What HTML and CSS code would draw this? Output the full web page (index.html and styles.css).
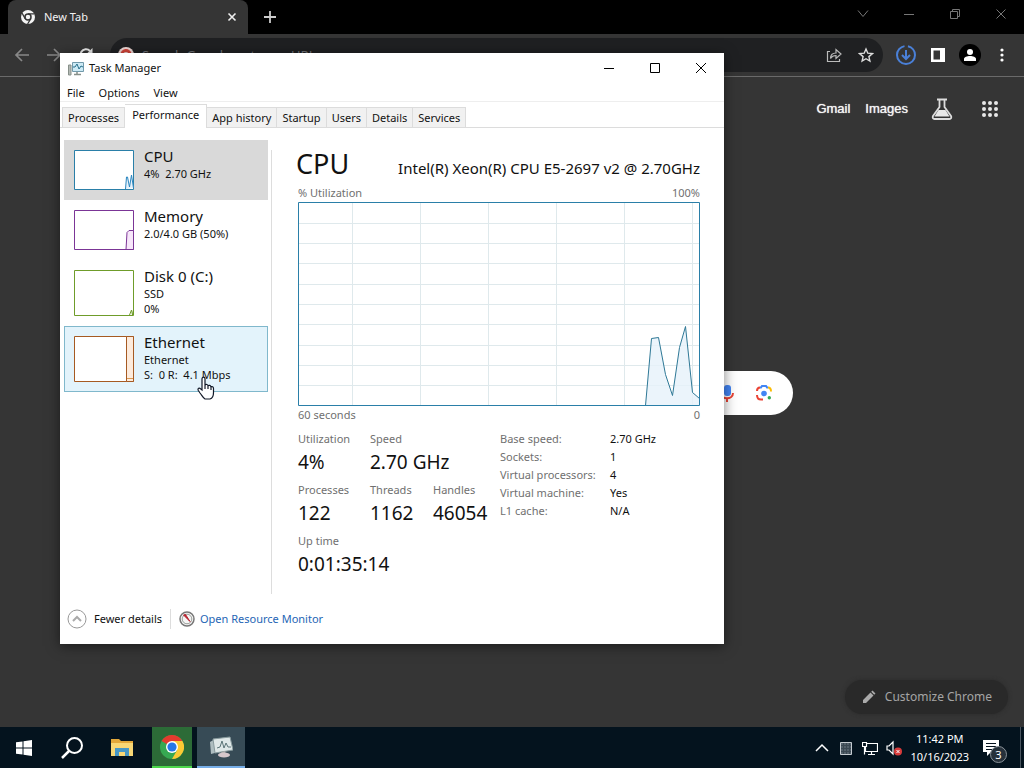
FILE: index.html
```html
<!DOCTYPE html>
<html lang="en">
<head>
<meta charset="utf-8">
<title>Desktop</title>
<link rel="stylesheet" href="styles.css">
</head>
<body>
<div class="desktop">
  <div class="browser">
    <div class="tab-strip">
      <div class="browser-tab">
        <svg class="i16" viewBox="0 0 16 16"><circle cx="8" cy="8" r="7" fill="#f4f4f4"/><circle cx="8" cy="8" r="3" fill="#f4f4f4" stroke="#353535" stroke-width="1.5"/><path d="M8 4.800h6.500M5.200 9.600L2 4M10.800 9.600L7.600 15" stroke="#353535" stroke-width="1.300"/></svg>
        <span class="browser-tab-title">New Tab</span>
        <button class="plain" aria-label="Close tab"><svg class="i16" viewBox="0 0 16 16"><path d="M4.500 4.500l7 7M11.500 4.500l-7 7" stroke="#eee" stroke-width="1.600"/></svg></button>
      </div>
      <button class="plain new-tab" aria-label="New tab"><svg class="i16" viewBox="0 0 16 16"><path d="M8 2v12M2 8h12" stroke="#ccc" stroke-width="1.800"/></svg></button>
      <div class="browser-controls">
        <button class="plain" aria-label="Search tabs"><svg class="i16" viewBox="0 0 16 16"><path d="M3 4.500l5 6 5-6" fill="none" stroke="#777"/></svg></button>
        <button class="plain" aria-label="Minimize browser"><svg class="i16" viewBox="0 0 16 16"><path d="M3 8.500h10" stroke="#777"/></svg></button>
        <button class="plain" aria-label="Restore browser"><svg class="i16" viewBox="0 0 16 16"><path d="M3.500 5.500h7v7h-7zM5.500 5V3.500h7v7H11" fill="none" stroke="#777"/></svg></button>
        <button class="plain" aria-label="Close browser"><svg class="i16" viewBox="0 0 16 16"><path d="M3.500 3.500l9 9M12.500 3.500l-9 9" stroke="#777"/></svg></button>
      </div>
    </div>
    <div class="toolbar">
      <div class="nav">
        <button class="plain" aria-label="Back"><svg class="i16" viewBox="0 0 16 16"><path d="M15 8H2M8 2L2 8l6 6" fill="none" stroke="#888" stroke-width="1.700"/></svg></button>
        <button class="plain" aria-label="Forward"><svg class="i16" viewBox="0 0 16 16"><path d="M1 8h13M8 2l6 6-6 6" fill="none" stroke="#888" stroke-width="1.700"/></svg></button>
        <button class="plain" aria-label="Reload"><svg class="i16" viewBox="0 0 16 16"><path d="M13.500 8A5.500 5.500 0 1 1 12 4" fill="none" stroke="#eee" stroke-width="2"/><path d="M14.500 1v6h-6z" fill="#eee"/></svg></button>
      </div>
      <div class="omnibox">
        <svg class="i16" viewBox="0 0 16 16"><circle cx="8" cy="8" r="8" fill="#f1d9d6"/><path d="M4 8a4 4 0 0 1 8-1" fill="none" stroke="#d8453a" stroke-width="3"/></svg>
        <input class="address" type="text" aria-label="Address" placeholder="Search Google or type a URL">
        <button class="plain" aria-label="Share"><svg class="i16" viewBox="0 0 16 16"><path d="M4 4.500H1.500v10h12V12" fill="none" stroke="#bbb" stroke-width="1.200"/><path d="M4.500 11.500c0-4 2-5.500 5.500-5.500V2.500L15 7l-5 4.500V8.500c-3 0-4.300.8-5.500 3z" fill="none" stroke="#bbb" stroke-width="1.200"/></svg></button>
        <button class="plain" aria-label="Bookmark"><svg class="i16" viewBox="0 0 16 16"><path d="M8 2l1.800 4.200 4.600.4-3.500 3 1 4.400L8 11.700 4.100 14l1-4.400-3.500-3 4.600-.4z" fill="none" stroke="#ddd" stroke-width="1.400"/></svg></button>
      </div>
      <div class="extensions">
        <button class="plain" aria-label="Downloads"><svg class="i22" viewBox="0 0 22 22"><circle cx="11" cy="11" r="9" fill="none" stroke="#4a80d8" stroke-width="2" stroke-dasharray="53 3.550" stroke-dashoffset="12.400"/><path d="M11 6v9M7 11l4 4 4-4" fill="none" stroke="#4a80d8" stroke-width="2"/></svg></button>
        <button class="plain" aria-label="Side panel"><svg class="i16" viewBox="0 0 16 16"><path d="M1 1h14v14H1zM3.500 3.500v9H10v-9z" fill="#fff" fill-rule="evenodd"/></svg></button>
        <button class="plain" aria-label="Profile"><svg class="i22" viewBox="0 0 22 22"><circle cx="11" cy="11" r="11" fill="#000"/><circle cx="11" cy="8" r="3" fill="#fff"/><path d="M5 17v-2c0-2 3-3 6-3s6 1 6 3v2z" fill="#fff"/></svg></button>
        <button class="plain" aria-label="Menu"><svg class="i16" viewBox="0 0 16 16"><g fill="#fff"><circle cx="8" cy="3" r="1.600"/><circle cx="8" cy="8" r="1.600"/><circle cx="8" cy="13" r="1.600"/></g></svg></button>
      </div>
    </div>
    <div class="page">
      <div class="page-links">
        <a href="#gmail">Gmail</a>
        <a href="#images">Images</a>
        <button class="plain labs" aria-label="Labs"><svg class="i22" viewBox="0 0 22 22"><path d="M6 1.500h10M8.500 2v7L2 18c-.8 1.500 0 3 1.500 3h15c1.500 0 2.300-1.500 1.500-3l-6.500-9V2" fill="none" stroke="#ddd" stroke-width="1.800"/><path d="M7.500 12h7l4 6.500h-15z" fill="#e8e8e8"/></svg></button>
        <button class="plain apps" aria-label="Google apps"><svg class="i16" viewBox="0 0 16 16"><g fill="#e8e8e8"><circle cx="2" cy="2" r="2"/><circle cx="8" cy="2" r="2"/><circle cx="14" cy="2" r="2"/><circle cx="2" cy="8" r="2"/><circle cx="8" cy="8" r="2"/><circle cx="14" cy="8" r="2"/><circle cx="2" cy="14" r="2"/><circle cx="8" cy="14" r="2"/><circle cx="14" cy="14" r="2"/></g></svg></button>
      </div>
      <div class="search-pill">
        <button class="plain" aria-label="Search by voice"><svg class="i22" viewBox="0 0 22 22"><rect x="8" y="3" width="7" height="11" rx="3" fill="#4285f4"/><path d="M5 11c0 7 12 7 12 0M11 16v4" fill="none" stroke="#ea4335" stroke-width="2"/></svg></button>
        <button class="plain" aria-label="Search by image"><svg class="i16" viewBox="0 0 16 16"><g fill="none" stroke-width="2"><path d="M1 6c0-2 1-3.500 3-3.500" stroke="#ea4335"/><path d="M4 2.500h1L6 1h4l1 1.500h1" stroke="#4285f4"/><path d="M12 2.500c2 0 3 1 3 4" stroke="#fbbc04"/><path d="M1 10c0 3 1 4.500 4 4.500h2" stroke="#ea4335"/></g><circle cx="8" cy="8.500" r="2.800" fill="#4285f4"/><circle cx="13.300" cy="12.800" r="1.700" fill="#34a853"/></svg></button>
      </div>
      <button class="customize"><svg class="i16" viewBox="0 0 16 16"><path d="M2 14v-3l7.500-7.500 3 3L5 14zM10.200 2.800l1.300-1.300 3 3-1.300 1.300z" fill="#aaa"/></svg>Customize Chrome</button>
    </div>
  </div>

  <div class="taskbar">
    <button class="task" aria-label="Start"><svg class="i16" viewBox="0 0 16 16"><path d="M0 2.300l6.500-.9v6H0zM7.500 1.200L16 0v7.400H7.500zM0 8.500h6.500v6L0 13.700zM7.500 8.500H16V16l-8.500-1.200z" fill="#fff"/></svg></button>
    <button class="task" aria-label="Search"><svg class="i22" viewBox="0 0 22 22"><circle cx="13.500" cy="8.500" r="7.500" fill="none" stroke="#fff" stroke-width="2"/><path d="M8 14l-7 7" stroke="#fff" stroke-width="2.500"/></svg></button>
    <button class="task" aria-label="File Explorer"><svg class="i22" viewBox="0 0 22 22"><path d="M0 2h8l2 2h12v15H0z" fill="#e3a83a"/><path d="M0 6h22v13H0z" fill="#f8d775"/><path d="M4 19v-8h14v8h-4v-4H8v4z" fill="#4797c5"/></svg></button>
    <button class="task task-chrome" aria-label="Chrome"><svg class="i24" viewBox="0 0 24 24"><circle cx="12" cy="12" r="12" fill="#36a852"/><path d="M12 12L1.600 6A12 12 0 0 1 22.400 6H12z" fill="#e33b2e"/><path d="M22.400 6A12 12 0 0 1 12 24l5.200-9L12 6z" fill="#fcc934"/><circle cx="12" cy="12" r="6" fill="#fff"/><circle cx="12" cy="12" r="4.600" fill="#2677e8"/></svg></button>
    <button class="task task-manager" aria-label="Task Manager"><svg class="i24" viewBox="0 0 24 24"><path d="M1 7l5-3v14l-4 1z" fill="#aebdc0"/><path d="M4 4l17-2 3 13-18 3z" fill="#dfe8e8" stroke="#889a9d"/><path d="M8 13l3-1 2-6 2 7 2-5 2 4h3" fill="none" stroke="#5c7578"/><path d="M12 17l4-1 1 3h-4z" fill="#aaa"/><ellipse cx="15" cy="20" rx="6" ry="2.500" fill="#d6c7cb"/></svg></button>
    <div class="tray">
      <button class="plain" aria-label="Show hidden icons"><svg class="i16" viewBox="0 0 16 16"><path d="M2 11l6-6 6 6" fill="none" stroke="#fff" stroke-width="1.500"/></svg></button>
      <svg class="i16" viewBox="0 0 16 16"><path d="M2.500 2.500h11v12h-11z" fill="#53606a" stroke="#c5cbd0"/><path d="M5.500 3v11M8.500 3v11M11.500 3v11M3 5.500h10M3 8.500h10M3 11.500h10" stroke="#3b4852"/></svg>
      <svg class="i16" viewBox="0 0 16 16"><path d="M5 3.500h10.500v8H3.500V7M9.500 12v2.500M6 14.500h7M.500 2.500h4v4h-4zM2.500 7v7.500" fill="none" stroke="#fff" stroke-width="1.200"/></svg>
      <svg class="i16" viewBox="0 0 16 16"><path d="M1 6h2l4-4v12l-4-4H1z" fill="none" stroke="#fff" stroke-width="1.200"/><circle cx="12" cy="11.500" r="4" fill="#d83b3b"/><path d="M10.500 10l3 3M13.500 10l-3 3" stroke="#fff"/></svg>
      <div class="clock"><time>11:42 PM</time><time>10/16/2023</time></div>
      <button class="plain notices" aria-label="Notifications"><svg class="i16" viewBox="0 0 16 16"><path d="M0 0h16v12H8l-4 4v-4H0z" fill="#fff"/><path d="M3 3.500h10M3 6.500h10M3 9.500h6" stroke="#06131f"/></svg><span class="badge">3</span></button>
    </div>
    <button class="show-desktop" aria-label="Show desktop"></button>
  </div>

  <section class="window" aria-label="Task Manager">
    <header class="titlebar">
      <svg class="i16" viewBox="0 0 16 16"><path d="M.500 5h2.500v10H.500z" fill="#b4bab5" stroke="#87908a"/><path d="M4.500 2.500h11v9h-11z" fill="#cdeaf5" stroke="#7199aa"/><path d="M5 7h2l2-3 2 5 2-3 2 1" fill="none" stroke="#28708c"/><path d="M9 12v2M6 14.500h7" stroke="#87908a" stroke-width="1.500"/></svg>
      <h1>Task Manager</h1>
      <button class="wbtn" aria-label="Minimize"><svg class="i16" viewBox="0 0 16 16"><path d="M3 8.500h10" stroke="#000"/></svg></button>
      <button class="wbtn" aria-label="Maximize"><svg class="i16" viewBox="0 0 16 16"><path d="M3.500 3.500h9v9h-9z" fill="none" stroke="#000"/></svg></button>
      <button class="wbtn" aria-label="Close"><svg class="i16" viewBox="0 0 16 16"><path d="M3 3l10 10M13 3L3 13" stroke="#000"/></svg></button>
    </header>
    <nav class="menu"><button>File</button><button>Options</button><button>View</button></nav>
    <div class="tabs" role="tablist">
      <button role="tab">Processes</button><button role="tab" class="active" aria-selected="true">Performance</button><button role="tab">App history</button><button role="tab">Startup</button><button role="tab">Users</button><button role="tab">Details</button><button role="tab">Services</button>
    </div>
    <div class="body">
      <div class="side">
        <button class="resource selected">
          <svg class="thumb" viewBox="0 0 60 40"><path d="M.500.500h59v39H.500z" fill="#fff" stroke="#2a7fa8"/><path d="M51.500 39l1-12h1l2 10 2-12 2 13" fill="#e6f1fa" stroke="#2a86c0"/></svg>
          <span class="info"><strong>CPU</strong><span>4%&nbsp; 2.70 GHz</span></span>
        </button>
        <button class="resource">
          <svg class="thumb" viewBox="0 0 60 40"><path d="M.500.500h59v39H.500z" fill="#fff" stroke="#7b3596"/><path d="M52 39.500l1-17 2-2h4.500v19z" fill="#f7e6fa" stroke="#7b3596"/></svg>
          <span class="info"><strong>Memory</strong><span>2.0/4.0 GB (50%)</span></span>
        </button>
        <button class="resource tall">
          <svg class="thumb" viewBox="0 0 60 46"><path d="M.500.500h59v45H.500z" fill="#fff" stroke="#6f9c2a"/><path d="M55.500 45l2-5 1 5 1-5" fill="none" stroke="#6f9c2a"/></svg>
          <span class="info"><strong>Disk 0 (C:)</strong><span>SSD</span><span>0%</span></span>
        </button>
        <button class="resource tall hover">
          <svg class="thumb" viewBox="0 0 60 46"><path d="M.500.500h59v45H.500z" fill="#fff" stroke="#a65a22"/><path d="M52.500.500h7v45h-7z" fill="#fdebdc" stroke="#a65a22"/><path d="M53 42.500h6" stroke="#d99a55"/></svg>
          <span class="info"><strong>Ethernet</strong><span>Ethernet</span><span>S:&nbsp; 0 R:&nbsp; 4.1 Mbps</span></span>
        </button>
      </div>
      <main class="detail">
        <div class="heading"><h2>CPU</h2><span>Intel(R) Xeon(R) CPU E5-2697 v2 @ 2.70GHz</span></div>
        <div class="axis"><span>% Utilization</span><span>100%</span></div>
        <svg class="chart" viewBox="0 0 402 204" preserveAspectRatio="none">
          <path d="M54.500 0v204M122.500 0v204M190.500 0v204M258.500 0v204M326.500 0v204M394.500 0v204M0 21.500h402M0 41.500h402M0 61.500h402M0 82.500h402M0 102.500h402M0 122.500h402M0 143.500h402M0 163.500h402M0 183.500h402" stroke="#dfe9ec" fill="none"/>
          <path d="M347.500 203.500L353.500 136.500 360.500 135.500 367.500 172.500 374.500 193.500 381.500 145.500 387.500 124.500 394.500 190.500 401.500 196.500V203.500z" fill="#e6f1fa" fill-opacity=".8"/>
          <path d="M347.500 203.500L353.500 136.500 360.500 135.500 367.500 172.500 374.500 193.500 381.500 145.500 387.500 124.500 394.500 190.500 401.500 196.500" fill="none" stroke="#2e7896"/>
          <path d="M.500.500h401v203H.500z" fill="none" stroke="#2a7fa8"/>
        </svg>
        <div class="axis"><span>60 seconds</span><span>0</span></div>
        <div class="stats">
          <div class="big">
            <dl><div class="c1"><dt>Utilization</dt><dd>4%</dd></div><div><dt>Speed</dt><dd>2.70 GHz</dd></div></dl>
            <dl><div class="c1"><dt>Processes</dt><dd>122</dd></div><div class="c2"><dt>Threads</dt><dd>1162</dd></div><div><dt>Handles</dt><dd>46054</dd></div></dl>
            <dl><div><dt>Up time</dt><dd>0:01:35:14</dd></div></dl>
          </div>
          <table class="facts">
            <tr><th scope="row">Base speed:</th><td>2.70 GHz</td></tr>
            <tr><th scope="row">Sockets:</th><td>1</td></tr>
            <tr><th scope="row">Virtual processors:</th><td>4</td></tr>
            <tr><th scope="row">Virtual machine:</th><td>Yes</td></tr>
            <tr><th scope="row">L1 cache:</th><td>N/A</td></tr>
          </table>
        </div>
      </main>
    </div>
    <footer class="footer">
      <button class="fewer"><svg class="i20" viewBox="0 0 20 20"><circle cx="10" cy="10" r="9" fill="#fff" stroke="#999"/><path d="M6 12l4-4 4 4" fill="none" stroke="#aaa" stroke-width="2"/></svg>Fewer details</button>
      <a href="#monitor"><svg class="i16" viewBox="0 0 16 16"><circle cx="8" cy="8" r="7" fill="#f5f5f5" stroke="#777" stroke-width="1.500"/><circle cx="8" cy="8" r="4.800" fill="none" stroke="#9a9f9a"/><path d="M4.500 4l2-.5 4.500 7z" fill="#b8232f" stroke="#b8232f"/></svg>Open Resource Monitor</a>
    </footer>
  </section>

  <svg class="pointer" viewBox="0 0 18 24"><path d="M5 14V3c0-2.500 3-2.500 3 0v6c1-1 3-.5 3 .8 1-.9 2.700-.4 2.900 1 1.300-.6 2.600.2 2.600 1.700v4c0 4-1.500 6-3.500 6.500H8c-2-1-3-3.500-5-6l-1.800-2.800c-.7-1.800 1-2.700 2.300-1.500zM8 9v4M11 10v3M14 11v3" fill="#fff" stroke="#111827" stroke-width="1.200"/></svg>
</div>
</body>
</html>
```
FILE: styles.css
```css
* { box-sizing: border-box; }
body { margin: 0; font: 11px/16px "Noto Sans", "Open Sans", sans-serif; color: #111; }
button { font: inherit; color: inherit; border: 0; padding: 0; background: none; }
svg { display: block; flex: none; }
h1, h2, dl, dd { margin: 0; font-weight: 400; }
a { text-decoration: none; }
.i16 { width: 16px; height: 16px; }
.i20 { width: 20px; height: 20px; }
.i22 { width: 22px; height: 22px; }
.i24 { width: 24px; height: 24px; }
.plain { display: flex; align-items: center; justify-content: center; }

.desktop { position: relative; display: flex; flex-direction: column; min-height: 100vh; overflow: hidden; }

/* Browser */
.browser { flex: 1; display: flex; flex-direction: column; background: #353535; color: #f2f2f2; }
.tab-strip { display: flex; height: 34px; background: #000; padding-left: 8px; align-items: stretch; }
.browser-tab { display: flex; align-items: center; gap: 8px; width: 240px; padding: 0 8px 0 12px; background: #353535; border-radius: 8px 8px 0 0; }
.browser-tab-title { flex: 1; }
.new-tab { margin-left: 14px; }
.browser-controls { display: flex; margin-left: auto; padding-bottom: 6px; }
.browser-controls .plain { width: 46px; }
.toolbar { display: flex; align-items: center; height: 43px; border-bottom: 1px solid #6a6a6a; padding-right: 14px; }
.nav { display: flex; gap: 16px; padding: 0 16px 0 14px; }
.omnibox { flex: 1; display: flex; align-items: center; gap: 16px; height: 34px; padding: 0 9px 0 8px; border-radius: 17px; background: #1f2022; }
.address { flex: 1; min-width: 0; margin-left: -8px; padding: 0; border: 0; background: none; color: #ddd; font: 13px/20px "Noto Sans", sans-serif; }
.address::placeholder { color: #73767a; }
.extensions { display: flex; align-items: center; gap: 13px; padding-left: 12px; }
.page { flex: 1; display: flex; flex-direction: column; align-items: center; }
.page-links { display: flex; align-items: center; align-self: flex-end; gap: 15px; height: 64px; padding-right: 26px; }
.page-links a { color: #f5f5f5; font: 13px/16px "Liberation Sans", Arial, sans-serif; text-shadow: 0 0 1px #fff; }
.labs { margin-left: 8px; }
.apps { margin-left: 14px; }
.search-pill { display: flex; align-items: center; justify-content: flex-end; gap: 18px; width: 561px; height: 44px; margin-top: 230px; padding-right: 21px; border-radius: 22px; background: #fff; }
.customize { display: flex; align-items: center; gap: 8px; align-self: flex-end; height: 34px; margin: auto 16px 13px 0; padding: 0 16px; border-radius: 17px; background: #292929; color: #a5a5a5; font-size: 12px; box-shadow: 0 0 4px #2a2a2a; }

/* Taskbar */
.taskbar { display: flex; align-items: stretch; height: 41px; background: #04131e; color: #fff; }
.task { display: flex; align-items: center; justify-content: center; width: 48px; }
.task:nth-child(3) { margin-left: 2px; }
.task-chrome { width: 40px; margin-left: 6px; background: #2c6b37; border-bottom: 2px solid #4cd84c; }
.task-manager { margin-left: 5px; background: #374b56; border-bottom: 2px solid #76aee8; }
.tray { display: flex; align-items: center; gap: 8px; margin-left: auto; padding-right: 21px; }
.clock { display: flex; flex-direction: column; align-items: center; line-height: 18px; }
.notices { position: relative; margin-left: 6px; }
.badge { position: absolute; left: 7px; top: 6px; width: 17px; height: 17px; border: 1px solid #8a9299; border-radius: 50%; background: #26313b; line-height: 15px; text-align: center; }
.show-desktop { width: 4px; border-left: 1px solid #4a5660; }

/* Task Manager window */
.window { position: absolute; left: 60px; top: 53px; right: 300px; bottom: 124px; display: flex; flex-direction: column; background: #fff; box-shadow: 0 2px 12px rgba(0, 0, 0, .5); }
.titlebar { display: flex; align-items: center; height: 30px; padding-left: 8px; gap: 5px; }
.titlebar h1 { flex: 1; font-size: 11px; }
.wbtn { display: flex; align-items: center; justify-content: center; width: 46px; height: 28px; margin-left: -5px; }
.menu { display: flex; gap: 14px; height: 19px; padding: 0 7px; border-bottom: 1px solid #eee; }
.menu button { height: 19px; padding-top: 1px; }
.tabs { display: flex; align-items: flex-end; height: 26px; padding-left: 2px; border-bottom: 1px solid #dcdcdc; }
.tabs button { height: 20px; padding: 0 5px; border: 1px solid #dcdcdc; border-width: 1px 1px 0 0; background: #f1f1f1; }
.tabs button:first-child { border-left-width: 1px; }
.tabs .active { height: 24px; margin-bottom: -1px; padding: 0 7px 3px; background: #fff; }
.body { flex: 1; display: flex; padding: 12px 24px 0 4px; }
.side { display: flex; flex-direction: column; width: 204px; }
.resource { display: flex; align-items: flex-start; gap: 10px; height: 60px; padding: 10px; text-align: left; }
.tall { height: 66px; }
.selected { background: #d9d9d9; }
.hover { background: #e3f3fb; outline: 1px solid #80b8cc; outline-offset: -1px; }
.thumb { width: 60px; height: 40px; }
.tall .thumb { height: 46px; }
.info { display: flex; flex-direction: column; line-height: 15px; white-space: nowrap; }
.info strong { font-size: 15px; font-weight: 400; line-height: 16px; margin-top: -2px; padding-bottom: 2px; }
.detail { flex: 1; display: flex; flex-direction: column; min-width: 0; margin: 10px 0 0 3px; padding-left: 26px; border-left: 1px solid #ddd; }
.heading { display: flex; justify-content: space-between; align-items: baseline; margin: -4px 0 0 -2px; font-size: 15px; line-height: 36px; white-space: nowrap; }
.heading h2 { font-size: 27px; }
.axis { display: flex; justify-content: space-between; color: #707070; line-height: 18px; margin-top: -2px; }
.chart { width: 100%; height: 204px; }
.chart + .axis { margin-top: 0; }
.stats { display: flex; gap: 12px; margin-top: 6px; }
.big { width: 190px; white-space: nowrap; }
.big dl { display: flex; height: 51px; }
.c1 { width: 72px; }
.c2 { width: 63px; }
dt { color: #707070; line-height: 18px; }
dd { font-size: 19px; line-height: 28px; }
.facts { align-self: flex-start; border-collapse: collapse; font-size: 11px; line-height: 18px; white-space: nowrap; }
.facts th { width: 110px; padding: 0; color: #707070; font-weight: 400; text-align: left; }
.facts td { padding: 0; }
.footer { display: flex; align-items: center; height: 50px; padding-left: 7px; }
.fewer { display: flex; align-items: center; gap: 7px; padding-right: 8px; border-right: 1px solid #ddd; }
.footer a { display: flex; align-items: center; gap: 5px; padding-left: 8px; color: #2565b5; }

.pointer { position: absolute; left: 197px; top: 376px; width: 18px; height: 24px; }
```
